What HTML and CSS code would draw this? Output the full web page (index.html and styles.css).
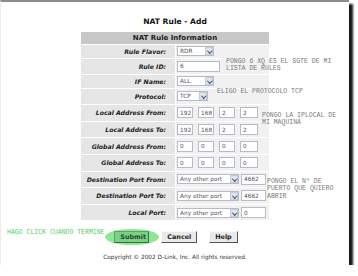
FILE: index.html
```html
<!DOCTYPE html>
<html lang="en">
    <head>
        <meta charset="UTF-8">
        <title>NAT Rule - Add</title>
        <link rel="stylesheet" href="styles.css">
    </head>
    <body>
        <div class="frame">
            <h1 class="title">NAT Rule - Add</h1>

            <table class="rules">
                <thead>
                    <tr class="row-head">
                        <th colspan="2">NAT Rule Information</th>
                    </tr>
                </thead>
                <tbody>
                    <tr class="row-sm">
                        <td class="label">Rule Flavor:</td>
                        <td class="value"><span class="select w37">RDR<i class="arrow"></i></span></td>
                    </tr>
                    <tr class="row-lg">
                        <td class="label">Rule ID:</td>
                        <td class="value"><span class="input w43">6</span></td>
                    </tr>
                    <tr class="row-sm">
                        <td class="label">IF Name:</td>
                        <td class="value"><span class="select w37">ALL<i class="arrow"></i></span></td>
                    </tr>
                    <tr class="row-lg">
                        <td class="label">Protocol:</td>
                        <td class="value"><span class="select w31">TCP<i class="arrow"></i></span></td>
                    </tr>
                    <tr class="row-lg">
                        <td class="label">Local Address From:</td>
                        <td class="value ip">
                            <span class="input w16">192</span><span class="input w16">168</span><span class="input w16">2</span><span class="input w18">2</span>
                        </td>
                    </tr>
                    <tr class="row-lg">
                        <td class="label">Local Address To:</td>
                        <td class="value ip">
                            <span class="input w16">192</span><span class="input w16">168</span><span class="input w16">2</span><span class="input w18">2</span>
                        </td>
                    </tr>
                    <tr class="row-lg">
                        <td class="label">Global Address From:</td>
                        <td class="value ip">
                            <span class="input w16">0</span><span class="input w16">0</span><span class="input w16">0</span><span class="input w18">0</span>
                        </td>
                    </tr>
                    <tr class="row-lg">
                        <td class="label">Global Address To:</td>
                        <td class="value ip">
                            <span class="input w16">0</span><span class="input w16">0</span><span class="input w16">0</span><span class="input w18">0</span>
                        </td>
                    </tr>
                    <tr class="row-lg">
                        <td class="label">Destination Port From:</td>
                        <td class="value port">
                            <span class="select w62">Any other port<i class="arrow"></i></span><span class="input w25">4662</span>
                        </td>
                    </tr>
                    <tr class="row-lg">
                        <td class="label">Destination Port To:</td>
                        <td class="value port">
                            <span class="select w62">Any other port<i class="arrow"></i></span><span class="input w25">4662</span>
                        </td>
                    </tr>
                    <tr class="row-lg">
                        <td class="label">Local Port:</td>
                        <td class="value port">
                            <span class="select w62">Any other port<i class="arrow"></i></span><span class="input w25">0</span>
                        </td>
                    </tr>
                </tbody>
            </table>

            <div class="buttons">
                <span class="highlight"></span>
                <button class="btn btn-submit">Submit</button>
                <button class="btn">Cancel</button>
                <button class="btn">Help</button>
            </div>

            <p class="copyright">Copyright &copy; 2002 D-Link, Inc. All rights reserved.</p>

            <!-- notas escritas encima de la captura -->
            <div class="note note-id">PONGO 6 XQ ES EL SGTE DE MI<br>LISTA DE RULES</div>
            <div class="note note-proto">ELIGO EL PROTOCOLO TCP</div>
            <div class="note note-ip">PONGO LA IPLOCAL DE<br>MI MAQUINA</div>
            <div class="note note-port">PONGO EL N&ordm; DE<br>PUERTO QUE QUIERO<br>ABRIR</div>
            <div class="note note-click">HAGO CLICK CUANDO TERMINE</div>
        </div>
    </body>
</html>
```

FILE: styles.css
```css
* {
    margin: 0;
    padding: 0;
    box-sizing: border-box;
}

body {
    background-color: white;
    font-family: "DejaVu Sans", Verdana, sans-serif;
    color: #222;
}

.frame {
    position: relative;
    width: 349px;
    height: 265px;
    background-color: white;
    border-top: 2px solid #8c8c8c;
    border-left: 1px solid #ececec;
    box-shadow: 4px 4px 2px rgba(0,0,0,0.9);
    display: flex;
    flex-direction: column;
    align-items: center;
}

.title {
    font-size: 7.6px;
    font-weight: bold;
    margin-top: 15px;
    height: 15px;
    color: #111;
}

.rules {
    width: 188px;
    border-collapse: separate;
    border-spacing: 0;
    font-size: 6.2px;
}

.row-head th {
    height: 13px;
    background-color: #c7c7c7;
    font-size: 7px;
    font-weight: bold;
    color: #1a1a1a;
    text-align: center;
    border-bottom: 1px solid white;
}

.row-sm td {
    height: 13.5px;
}

.row-lg td {
    height: 16.6px;
}

.label {
    width: 95px;
    background-color: #e6e6e6;
    border-right: 1px solid white;
    border-bottom: 1px solid white;
    text-align: right;
    padding-right: 9px;
    font-weight: bold;
    font-style: italic;
    color: #222;
    white-space: nowrap;
}

.value {
    background-color: #f1f1f1;
    border-bottom: 1px solid white;
    padding-left: 1px;
    white-space: nowrap;
}

.value > span {
    vertical-align: middle;
}

.ip .input {
    margin-right: 5px;
}

.port .select {
    margin-right: 2px;
}

.input,
.select {
    display: inline-flex;
    align-items: center;
    position: relative;
    height: 10px;
    background-color: white;
    border: 1px solid #b5bcc6;
    padding-left: 2px;
    font-size: 5.8px;
    color: #555;
}

.input {
    height: 11px;
}

.arrow {
    position: absolute;
    right: 0;
    top: 0;
    width: 8px;
    height: 8px;
    background-color: #dde4ee;
    border: 1px solid #c3ccd8;
}

.arrow::after {
    content: "";
    position: absolute;
    left: 1.5px;
    top: 1px;
    width: 2.5px;
    height: 2.5px;
    border-right: 1.2px solid #3a4a70;
    border-bottom: 1.2px solid #3a4a70;
    transform: rotate(45deg);
}

.w16 { width: 16px; }
.w18 { width: 18px; }
.w25 { width: 25px; }
.w31 { width: 31px; }
.w37 { width: 37px; }
.w43 { width: 43px; }
.w62 { width: 62px; }

.buttons {
    position: relative;
    display: flex;
    gap: 12px;
    margin-top: 10px;
    margin-left: 2px;
}

.highlight {
    position: absolute;
    left: -9px;
    top: -2px;
    width: 54px;
    height: 16px;
    border-radius: 50%;
    background-color: #8ee891;
}

.btn {
    position: relative;
    height: 12px;
    padding: 0 5px;
    background-color: #e9e9e9;
    border: 1px solid #f7f7f7;
    border-right-color: #555;
    border-bottom-color: #555;
    font-family: "DejaVu Sans", Verdana, sans-serif;
    font-size: 6.4px;
    font-weight: bold;
    color: #222;
}

.btn-submit {
    width: 35px;
    background-color: #7ccf86;
    border-color: #5aa763;
    border-right-color: #3b6b40;
    border-bottom-color: #3b6b40;
    color: #244a2a;
}

.copyright {
    margin-top: 11px;
    font-size: 5.8px;
    color: #333;
}

.note {
    position: absolute;
    font-family: "Liberation Mono", "Courier New", monospace;
    font-size: 6.5px;
    line-height: 7.4px;
    color: #7a7a7a;
    white-space: nowrap;
}

.note-id {
    left: 225px;
    top: 56px;
}

.note-proto {
    left: 216px;
    top: 86px;
}

.note-ip {
    left: 261px;
    top: 110px;
}

.note-port {
    left: 266px;
    top: 176px;
}

.note-click {
    left: 6px;
    top: 227px;
    color: #4fd163;
}
```
